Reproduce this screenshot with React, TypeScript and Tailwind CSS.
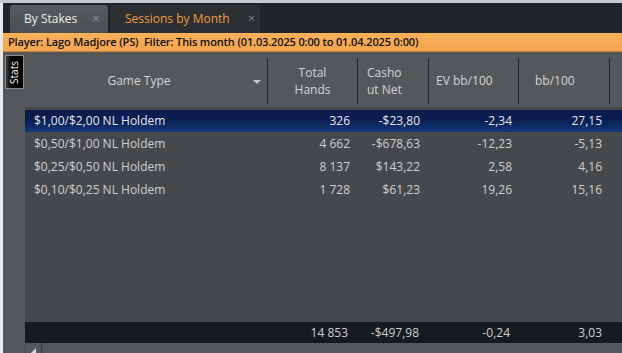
import React from "react";

const rows = [
  { g: "$1,00/$2,00 NL Holdem", h: "326", c: "-$23,80", ev: "-2,34", bb: "27,15", sel: true },
  { g: "$0,50/$1,00 NL Holdem", h: "4 662", c: "-$678,63", ev: "-12,23", bb: "-5,13" },
  { g: "$0,25/$0,50 NL Holdem", h: "8 137", c: "$143,22", ev: "2,58", bb: "4,16" },
  { g: "$0,10/$0,25 NL Holdem", h: "1 728", c: "$61,23", ev: "19,26", bb: "15,16" },
];

const font = { fontFamily: '"Open Sans", "Noto Sans", sans-serif' };

export default function App() {
  return (
    <div className="w-[622px] h-[353px] overflow-hidden flex flex-col bg-[#54585b]" style={font}>
      <div className="h-[3px] bg-[#c6cacd]" />
      <div className="flex flex-1 min-h-0">
        <div className="w-[3px] bg-[#e9e9e9]" />
        <div className="flex-1 flex flex-col min-w-0">
          {/* tabs */}
          <div className="h-[30px] bg-[#212528] flex items-end pl-[7px] gap-[2px]">
            <div className="h-[28px] w-[98px] rounded-t-[3px] bg-gradient-to-b from-[#585c5f] to-[#4b4f52] flex items-center pl-[14px] text-[12px] text-[#ececec]">
              <span>By Stakes</span>
              <span className="ml-[15px] text-[#8e9295] text-[13px]">×</span>
            </div>
            <div className="h-[28px] w-[150px] rounded-t-[3px] bg-[#2c3033] flex items-center pl-[15px] text-[12px] text-[#f29a3a]">
              <span>Sessions by Month</span>
              <span className="ml-[18px] text-[#7e8285] text-[13px]">×</span>
            </div>
          </div>
          {/* filter bar */}
          <div className="h-[19px] bg-gradient-to-b from-[#f8b05b] to-[#f3a54e] border-b border-[#c9863c] flex items-center pl-[5px] text-[11px] font-semibold text-[#111] tracking-[-0.14px] whitespace-nowrap">
            Player: Lago Madjore (PS)&nbsp;&nbsp;Filter: This month (01.03.2025 0:00 to 01.04.2025 0:00)
          </div>
          <div className="flex flex-1 min-h-0">
            {/* left gutter */}
            <div className="w-[22px] pt-[3px] pl-[2px]">
              <div className="w-[19px] h-[34px] border border-[#8a8d90] bg-gradient-to-r from-[#3a3a3a] via-[#000] to-[#000] flex items-center justify-center">
                <span className="text-white text-[10px] -rotate-90 whitespace-nowrap">Stats</span>
              </div>
            </div>
            <div className="flex-1 flex flex-col min-w-0">
              {/* header */}
              <div className="h-[55px] flex text-[12px] text-[#d4d4d4] pt-[3px]">
                <div className="w-[243px] flex items-center border-r border-[#1f2225] my-[3px] relative">
                  <span className="flex-1 text-center pr-[14px]">Game Type</span>
                  <span className="absolute right-[6px] top-[22px] w-0 h-0 border-l-[4px] border-r-[4px] border-t-[4px] border-l-transparent border-r-transparent border-t-[#c8c8c8]" />
                </div>
                <div className="w-[90px] flex items-center justify-center text-center leading-[17px] border-r border-[#1f2225] my-[3px]">
                  Total<br />Hands
                </div>
                <div className="w-[71px] flex items-center pl-[9px] leading-[17px] border-r border-[#1f2225] my-[3px]">
                  Casho<br />ut Net
                </div>
                <div className="w-[90px] flex items-center pl-[7px] border-r border-[#1f2225] my-[3px]">EV bb/100</div>
                <div className="w-[91px] flex items-center pl-[16px] border-r border-[#1f2225] my-[3px]">bb/100</div>
                <div className="flex-1" />
              </div>
              {/* data */}
              <div className="flex-1 bg-[#46494c] pt-[3px] text-[12px] text-[#cfcfcf]">
                {rows.map((r) => (
                  <div
                    key={r.g}
                    className={
                      "flex items-center " +
                      (r.sel ? "h-[22px] bg-gradient-to-b from-[#0b1a4c] via-[#0a1f55] to-[#123a78] text-[#e8e8e8]" : "h-[23px]")
                    }
                  >
                    <div className="w-[243px] pl-[9px]">{r.g}</div>
                    <div className="w-[82px] text-right">{r.h}</div>
                    <div className="w-[70px] text-right">{r.c}</div>
                    <div className="w-[92px] text-right">{r.ev}</div>
                    <div className="w-[90px] text-right">{r.bb}</div>
                  </div>
                ))}
              </div>
              {/* total */}
              <div className="h-[21px] bg-[#161b1f] flex items-center text-[12px] text-[#cfcfcf]">
                <div className="w-[243px]" />
                <div className="w-[80px] text-right">14 853</div>
                <div className="w-[71px] text-right">-$497,98</div>
                <div className="w-[91px] text-right">-0,24</div>
                <div className="w-[92px] text-right">3,03</div>
              </div>
              {/* scrollbar */}
              <div className="h-[10px] bg-[#474a4d] flex">
                <div className="w-[16px] ml-[1px] bg-[#54585b] border-r border-[#3c3f42] flex items-end justify-center">
                  <span className="w-0 h-0 border-t-[5px] border-t-transparent border-r-[5px] border-r-[#d8d8d8]" />
                </div>
                <div className="flex-1 bg-[#54585b] ml-[1px]" />
              </div>
            </div>
          </div>
        </div>
      </div>
    </div>
  );
}
